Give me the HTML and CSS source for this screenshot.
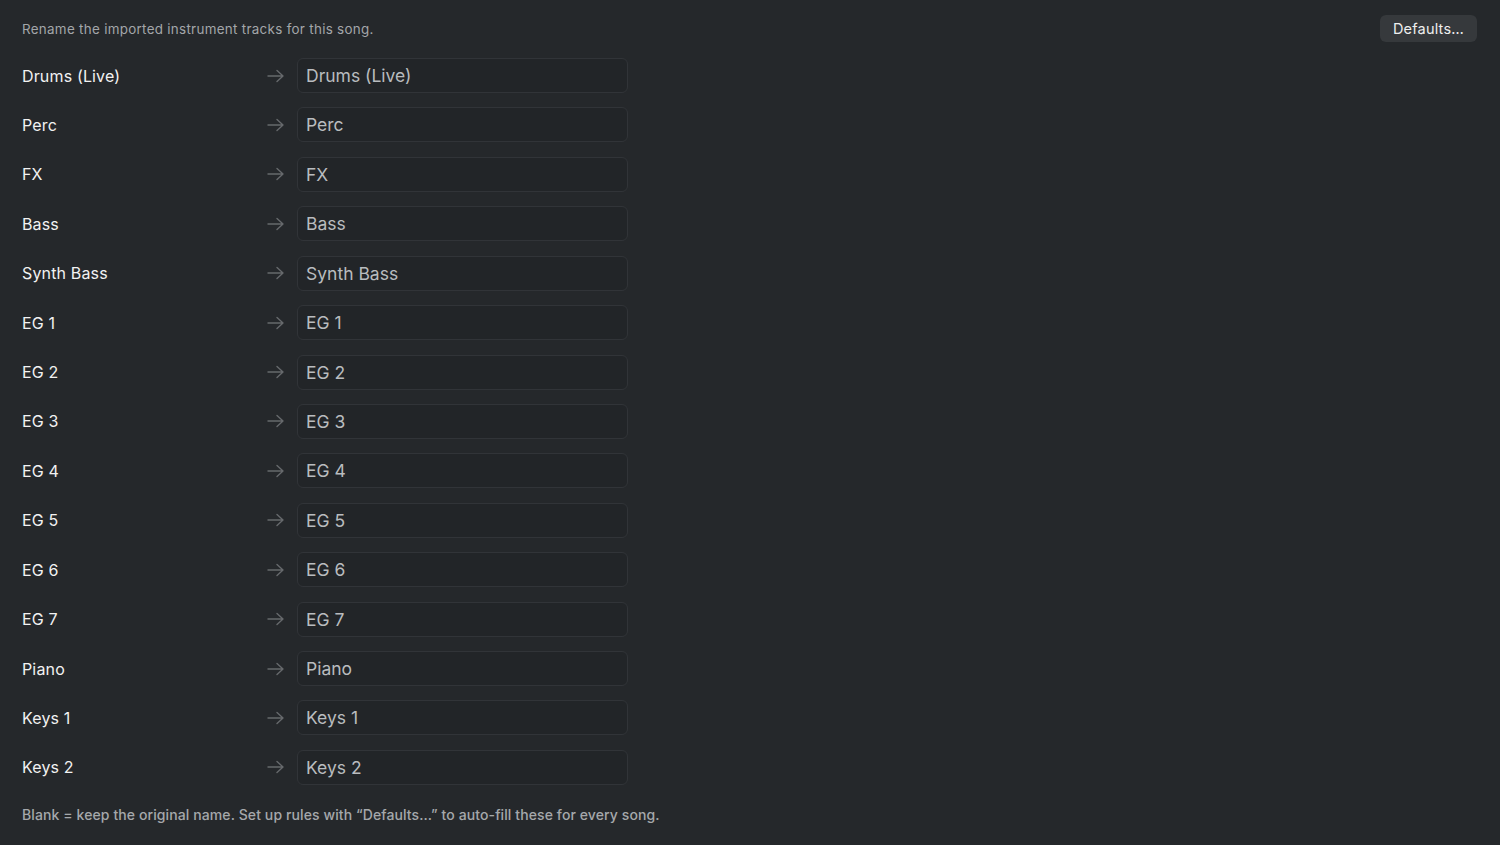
FILE: index.html
```html
<!DOCTYPE html>
<html lang="en">
<head>
<meta charset="utf-8">
<title>Rename Tracks</title>
<link rel="stylesheet" href="styles.css">
</head>
<body>
<div class="panel">
  <header class="top">
    <p class="intro">Rename the imported instrument tracks for this song.</p>
    <button class="btn">Defaults…</button>
  </header>

  <div class="rows">
    <div class="row"><span class="name">Drums (Live)</span><svg class="arrow" viewBox="0 0 18 14"><path d="M1 7h15M10 1.5 16 7l-6 5.5"/></svg><input class="field" value="Drums (Live)"></div>
    <div class="row"><span class="name">Perc</span><svg class="arrow" viewBox="0 0 18 14"><path d="M1 7h15M10 1.5 16 7l-6 5.5"/></svg><input class="field" value="Perc"></div>
    <div class="row"><span class="name">FX</span><svg class="arrow" viewBox="0 0 18 14"><path d="M1 7h15M10 1.5 16 7l-6 5.5"/></svg><input class="field" value="FX"></div>
    <div class="row"><span class="name">Bass</span><svg class="arrow" viewBox="0 0 18 14"><path d="M1 7h15M10 1.5 16 7l-6 5.5"/></svg><input class="field" value="Bass"></div>
    <div class="row"><span class="name">Synth Bass</span><svg class="arrow" viewBox="0 0 18 14"><path d="M1 7h15M10 1.5 16 7l-6 5.5"/></svg><input class="field" value="Synth Bass"></div>
    <div class="row"><span class="name">EG 1</span><svg class="arrow" viewBox="0 0 18 14"><path d="M1 7h15M10 1.5 16 7l-6 5.5"/></svg><input class="field" value="EG 1"></div>
    <div class="row"><span class="name">EG 2</span><svg class="arrow" viewBox="0 0 18 14"><path d="M1 7h15M10 1.5 16 7l-6 5.5"/></svg><input class="field" value="EG 2"></div>
    <div class="row"><span class="name">EG 3</span><svg class="arrow" viewBox="0 0 18 14"><path d="M1 7h15M10 1.5 16 7l-6 5.5"/></svg><input class="field" value="EG 3"></div>
    <div class="row"><span class="name">EG 4</span><svg class="arrow" viewBox="0 0 18 14"><path d="M1 7h15M10 1.5 16 7l-6 5.5"/></svg><input class="field" value="EG 4"></div>
    <div class="row"><span class="name">EG 5</span><svg class="arrow" viewBox="0 0 18 14"><path d="M1 7h15M10 1.5 16 7l-6 5.5"/></svg><input class="field" value="EG 5"></div>
    <div class="row"><span class="name">EG 6</span><svg class="arrow" viewBox="0 0 18 14"><path d="M1 7h15M10 1.5 16 7l-6 5.5"/></svg><input class="field" value="EG 6"></div>
    <div class="row"><span class="name">EG 7</span><svg class="arrow" viewBox="0 0 18 14"><path d="M1 7h15M10 1.5 16 7l-6 5.5"/></svg><input class="field" value="EG 7"></div>
    <div class="row"><span class="name">Piano</span><svg class="arrow" viewBox="0 0 18 14"><path d="M1 7h15M10 1.5 16 7l-6 5.5"/></svg><input class="field" value="Piano"></div>
    <div class="row"><span class="name">Keys 1</span><svg class="arrow" viewBox="0 0 18 14"><path d="M1 7h15M10 1.5 16 7l-6 5.5"/></svg><input class="field" value="Keys 1"></div>
    <div class="row"><span class="name">Keys 2</span><svg class="arrow" viewBox="0 0 18 14"><path d="M1 7h15M10 1.5 16 7l-6 5.5"/></svg><input class="field" value="Keys 2"></div>
  </div>

  <p class="note">Blank = keep the original name. Set up rules with “Defaults…” to auto-fill these for every song.</p>
</div>
</body>
</html>
```

FILE: styles.css
```css
html, body {
  margin: 0;
  height: 100%;
  background: #25282b;
}

body {
  font-family: Inter, "Noto Sans", "Liberation Sans", sans-serif;
  color: #ececec;
}

.panel {
  padding: 15px 22px 0 22px;
  display: flex;
  flex-direction: column;
}

.top {
  display: flex;
  align-items: center;
  justify-content: space-between;
  height: 27px;
}

.intro {
  margin: 0;
  font-size: 13.4px;
  color: #a3a6a9;
  letter-spacing: 0.3px;
}

.btn {
  margin-right: 1px;
  height: 27px;
  padding: 0 13px;
  border: none;
  border-radius: 6px;
  background: #36393c;
  color: #eeeeee;
  font-family: inherit;
  font-size: 14.5px;
  font-weight: 400;
  letter-spacing: 0.2px;
}

.rows {
  margin-top: 16px;
  display: flex;
  flex-direction: column;
  gap: 14.43px;
}

.row {
  display: grid;
  grid-template-columns: 233px 18px 331px;
  column-gap: 12px;
  align-items: center;
  height: 35px;
}

.name {
  font-size: 16px;
  font-weight: 400;
  letter-spacing: 0.15px;
  color: #f2f2f2;
}

.arrow {
  width: 18px;
  height: 14px;
  fill: none;
  stroke: #66696c;
  stroke-width: 1.4;
  stroke-linecap: round;
  stroke-linejoin: round;
}

.field {
  box-sizing: border-box;
  width: 331px;
  height: 35px;
  padding: 0 8px;
  border: 1px solid #313438;
  border-radius: 6px;
  background: #222528;
  color: #b9bcbf;
  font-family: inherit;
  font-size: 17.5px;
  outline: none;
}

.note {
  margin: 21px 0 0 0;
  font-size: 14px;
  font-weight: 500;
  letter-spacing: 0.1px;
  color: #a5a8ab;
}
```
